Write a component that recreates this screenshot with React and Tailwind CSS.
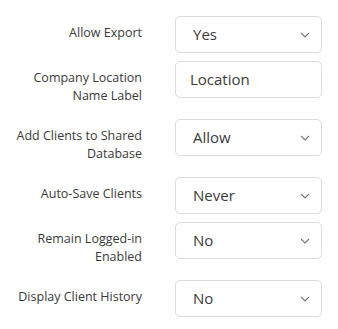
import React from 'react';

const rows = [
  { label: ['Allow Export'], value: 'Yes', type: 'select' },
  { label: ['Company Location', 'Name Label'], value: 'Location', type: 'input' },
  { label: ['Add Clients to Shared', 'Database'], value: 'Allow', type: 'select' },
  { label: ['Auto-Save Clients'], value: 'Never', type: 'select' },
  { label: ['Remain Logged-in', 'Enabled'], value: 'No', type: 'select' },
  { label: ['Display Client History'], value: 'No', type: 'select' },
];

const Chevron = () => (
  <svg width="10" height="6" viewBox="0 0 10 6" fill="none" className="absolute right-[11px] top-1/2 -translate-y-1/2">
    <path d="M1 1l4 4 4-4" stroke="#777" strokeWidth="1.1" />
  </svg>
);

const Field = ({ value, type }) => (
  <div className="relative w-[147px] h-[37px] border border-[#dcdcdc] rounded-[5px] bg-white flex items-center">
    <span className={`text-[15px] text-[#3a3a3a] ${type === 'select' ? 'pl-[17px]' : 'pl-[14px]'}`}>{value}</span>
    {type === 'select' && <Chevron />}
  </div>
);

export default function App() {
  return (
    <div className="bg-white w-[338px] h-[329px] pt-[16px] font-['Open_Sans',sans-serif]">
      {rows.map((r, i) => (
        <div key={i} className="flex items-start mb-[8px]">
          <div className="w-[142px] text-right text-[12.5px] leading-[18px] text-[#3a3a3a] pt-[8px] pb-[6px]">
            {r.label.map((l, j) => (
              <div key={j}>{l}</div>
            ))}
          </div>
          <div className="ml-[33px]">
            <Field value={r.value} type={r.type} />
          </div>
        </div>
      ))}
    </div>
  );
}
